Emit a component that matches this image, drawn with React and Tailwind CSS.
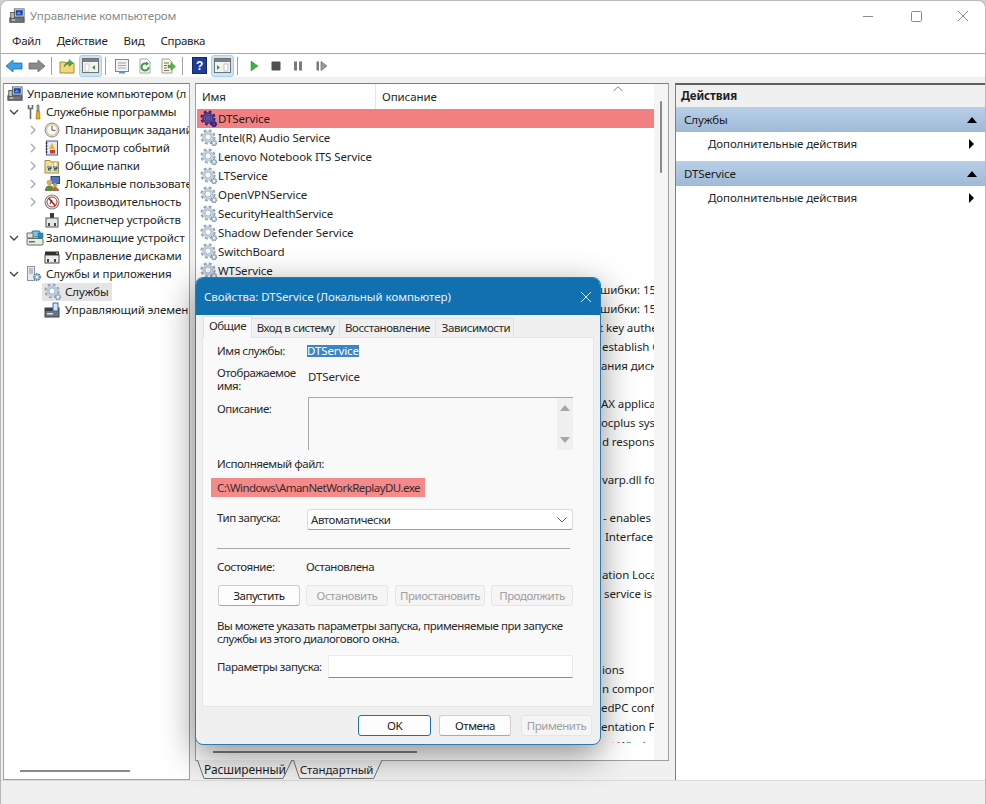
import React from "react";

const Gear = ({ dark }) => (
  <svg width="18" height="18" viewBox="0 0 18 18" className="shrink-0">
    <circle cx="8" cy="8" r="6.500" fill="none" stroke={dark ? "#2b2a7a" : "#8ea5b9"} strokeWidth="2.200" strokeDasharray="2.800 2.300" />
    <circle cx="8" cy="8" r="4.800" fill="none" stroke={dark ? "#3d3490" : "#bccbd9"} strokeWidth="2" />
    <circle cx="8" cy="8" r="3.200" fill={dark ? "#6a4a9a" : "#f8fafc"} stroke={dark ? "#2b2a7a" : "#7f97ad"} strokeWidth="0.800" />
    <circle cx="14" cy="14" r="2.600" fill={dark ? "#2b2a7a" : "#b4c5d3"} stroke={dark ? "#2b2a7a" : "#7d96ab"} strokeWidth="1.200" strokeDasharray="1.400 0.800" />
    <circle cx="14" cy="14" r="1" fill={dark ? "#6a4a9a" : "#fff"} />
  </svg>
);

const Computer = () => (
  <svg width="16" height="16" viewBox="0 0 18 18" className="shrink-0">
    <rect x="6" y="1" width="11" height="9" fill="#dfe6ee" stroke="#56606c" />
    <rect x="7.500" y="2.500" width="8" height="6" fill="#1b3f9c" />
    <path d="M8 7l3-3 3 3" fill="#5aa2e8" />
    <rect x="9" y="10" width="5" height="2" fill="#8a94a0" />
    <rect x="1" y="11" width="16" height="5" fill="#70767c" stroke="#3c4248" />
    <rect x="2" y="5" width="4" height="7" fill="#b9c0c8" stroke="#4a5058" />
    <rect x="3" y="13" width="4" height="1" fill="#fff" />
  </svg>
);

const Chev = ({ open }) => (
  <svg width="10" height="10" viewBox="0 0 10 10" className="shrink-0">
    {open ? (
      <path d="M1 3 5 7 9 3" fill="none" stroke="#404040" strokeWidth="1.300" />
    ) : (
      <path d="M3 1 7 5 3 9" fill="none" stroke="#a6a6a6" strokeWidth="1.300" />
    )}
  </svg>
);

const TreeIcon = ({ k }) => {
  const p = { width: 16, height: 16, viewBox: "0 0 16 16", className: "shrink-0" };
  switch (k) {
    case "tools":
      return (
        <svg {...p}>
          <path d="M2.500 1v3.500h4V1M4.500 4.500V15" fill="none" stroke="#6a6a6a" strokeWidth="1.600" />
          <path d="M11 1h2v6h-2z" fill="#a8a8a8" stroke="#5c5c5c" strokeWidth=".6" />
          <path d="M10.500 7h3l.5 8h-4z" fill="#e8a91c" stroke="#9a6c08" strokeWidth=".6" />
        </svg>
      );
    case "clock":
      return (
        <svg {...p}>
          <circle cx="8" cy="8" r="7" fill="#efe3c6" stroke="#8a8a8a" />
          <circle cx="8" cy="8" r="5.200" fill="#fbfaf4" stroke="#b8a878" strokeWidth=".6" />
          <path d="M8 4v4.300h3.400" fill="none" stroke="#555" strokeWidth="1" />
        </svg>
      );
    case "log":
      return (
        <svg {...p}>
          <rect x="2.500" y="1" width="11" height="14" fill="#e4e8f4" stroke="#4c5c80" />
          <path d="M1.500 3h2M1.500 6h2M1.500 9h2M1.500 12h2" stroke="#222" strokeWidth="1" />
          <path d="M8 3 11 9H5z" fill="#e9b420" />
          <rect x="6" y="10" width="5" height="3.500" fill="#c33d3d" />
        </svg>
      );
    case "share":
      return (
        <svg {...p}>
          <path d="M1 5V2.500h5l1 1.500h7.500V15H1z" fill="#f3dd90" stroke="#a88a38" />
          <path d="M10 4h3v6h-3z" fill="#fff" stroke="#a88a38" strokeWidth=".5" />
          <path d="M3 9h4v1.500H4.500V12H7M9 9h4v1.500h-2.500V12H13" fill="none" stroke="#2b5a9a" strokeWidth="1.200" />
        </svg>
      );
    case "users":
      return (
        <svg {...p}>
          <rect x="7" y="0.500" width="8.500" height="7" fill="#4d78c0" stroke="#2c4a84" />
          <circle cx="5.500" cy="6.500" r="2.800" fill="#d8a878" />
          <path d="M1 15c0-4 2-5.500 4.500-5.500S10 11 10 15z" fill="#5c8c3c" />
          <circle cx="11" cy="9" r="2.200" fill="#c89868" />
          <path d="M8 15c0-3 1.500-4 3-4s4 1 4 4z" fill="#b06a4a" />
        </svg>
      );
    case "perf":
      return (
        <svg {...p}>
          <circle cx="8" cy="8" r="7" fill="#f4f0e8" stroke="#8a8478" strokeWidth="1.200" />
          <circle cx="8" cy="8" r="5" fill="#fff" stroke="#c43030" strokeWidth="1" />
          <path d="M4.500 4 11.500 12" stroke="#b02020" strokeWidth="1.600" />
          <path d="M6 10l2-4" stroke="#303030" strokeWidth="1" />
        </svg>
      );
    case "device":
      return (
        <svg {...p}>
          <rect x="6" y="1" width="4" height="5" fill="#3c3c3c" />
          <rect x="2" y="6" width="12" height="9" fill="#e6e6e6" stroke="#555" />
          <rect x="4" y="11" width="2" height="3" fill="#444" />
          <rect x="10" y="11" width="2" height="3" fill="#444" />
        </svg>
      );
    case "storage":
      return (
        <svg {...p} width="18" viewBox="0 0 18 16">
          <rect x="6" y="1" width="8" height="6" rx="1" fill="#7fbfe8" stroke="#2f6f9c" />
          <rect x="12" y="3" width="5" height="5" fill="#1f8fd0" stroke="#1a5f8c" strokeWidth=".5" />
          <path d="M1 3h6v5H1z" fill="#dfe5e0" stroke="#5f7a68" />
          <rect x="1" y="8.500" width="16" height="6.500" rx="1" fill="#e8ebe6" stroke="#60705f" />
          <rect x="3" y="11" width="6" height="1.500" fill="#3c8a3c" />
        </svg>
      );
    case "disk":
      return (
        <svg {...p}>
          <rect x="1" y="7" width="14" height="8" fill="#ececec" stroke="#4a4a4a" />
          <rect x="1" y="3.500" width="14" height="3.500" fill="#2f2f2f" />
          <rect x="12" y="4.500" width="2" height="1.500" fill="#46c846" />
          <rect x="3" y="11" width="2" height="3" fill="#444" />
          <rect x="10" y="11" width="2" height="3" fill="#444" />
        </svg>
      );
    case "apps":
      return (
        <svg {...p}>
          <rect x="1.500" y="0.500" width="7" height="14" fill="#e6eaf0" stroke="#8a96a6" />
          <path d="M3 3h4M3 5h4M3 7h4" stroke="#8a96a6" />
          <circle cx="11" cy="11" r="3.200" fill="#a8c0d8" stroke="#4c78a8" strokeWidth="1.400" strokeDasharray="1.500 .8" />
          <circle cx="11" cy="11" r="1" fill="#fff" />
        </svg>
      );
    case "wmi":
      return (
        <svg {...p}>
          <rect x="1" y="6" width="14" height="9" fill="#6b7480" stroke="#3a424c" />
          <rect x="1" y="6" width="14" height="3" fill="#3a424c" />
          <rect x="9" y="1" width="5" height="8" fill="#d8e4f0" stroke="#3c6c9c" />
          <rect x="3" y="11" width="6" height="1.500" fill="#e4e4e4" />
        </svg>
      );
    default:
      return null;
  }
};

const tree = [
  { t: "Служебные программы", lvl: 1, open: true, i: "tools" },
  { t: "Планировщик заданий", lvl: 2, i: "clock", chev: true },
  { t: "Просмотр событий", lvl: 2, i: "log", chev: true },
  { t: "Общие папки", lvl: 2, i: "share", chev: true },
  { t: "Локальные пользовате", lvl: 2, i: "users", chev: true },
  { t: "Производительность", lvl: 2, i: "perf", chev: true },
  { t: "Диспетчер устройств", lvl: 2, i: "device" },
  { t: "Запоминающие устройст", lvl: 1, open: true, i: "storage" },
  { t: "Управление дисками", lvl: 2, i: "disk" },
  { t: "Службы и приложения", lvl: 1, open: true, i: "apps" },
  { t: "Службы", lvl: 2, gear: true, sel: true },
  { t: "Управляющий элемен", lvl: 2, i: "wmi" },
];

const names = ["Intel(R) Audio Service", "Lenovo Notebook ITS Service", "LTService", "OpenVPNService", "SecurityHealthService", "Shadow Defender Service", "SwitchBoard", "WTService"];

const behind = [
  { t: "шибки: 15", c: "ml-[404px]" },
  { t: "шибки: 15", c: "ml-[404px]" },
  { t: "t key authe", c: "ml-[403px]" },
  { t: "establish C", c: "ml-[406px]" },
  { t: "ания диск", c: "ml-[405px]" },
  { t: "\u00a0", c: "" },
  { t: "AX applica", c: "ml-[405px]" },
  { t: "ocplus sys", c: "ml-[405px]" },
  { t: "d responsi", c: "ml-[406px]" },
  { t: "\u00a0", c: "" },
  { t: "varp.dll fo", c: "ml-[406px]" },
  { t: "\u00a0", c: "" },
  { t: "- enables", c: "ml-[407px]" },
  { t: "Interface", c: "ml-[409px]" },
  { t: "\u00a0", c: "" },
  { t: "ation Loca", c: "ml-[406px]" },
  { t: "service is", c: "ml-[408px]" },
  { t: "\u00a0", c: "" },
  { t: "\u00a0", c: "" },
  { t: "\u00a0", c: "" },
  { t: "ions", c: "ml-[406px]" },
  { t: "n compon", c: "ml-[406px]" },
  { t: "edPC conf", c: "ml-[405px]" },
  { t: "entation Fo", c: "ml-[405px]" },
  { t: "nt Windows", c: "ml-[408px]" },
];

const Sep = ({ wide }) => <div className={"w-px h-[18px] bg-[#a0a0a0] " + (wide ? "ml-[3px] mr-[4px]" : "mx-[3px]")} />;

const TB = ({ children, active, w = "w-[23px]" }) => (
  <div className={"h-[22px] flex items-center justify-center rounded-[3px] " + w + " " + (active ? "bg-[#cce4f7] border border-[#a8d0f0]" : "")}>{children}</div>
);

const Toolbar = () => (
  <div className="h-[23px] bg-white flex items-center pl-[1px]">
    <TB>
      <svg width="18" height="14" viewBox="0 0 18 14"><path d="M1 7 8 1v3h9v6H8v3z" fill="#3da0e8" stroke="#1c6cb0" strokeWidth=".8" /></svg>
    </TB>
    <TB>
      <svg width="18" height="14" viewBox="0 0 18 14"><path d="M17 7 10 1v3H1v6h9v3z" fill="#8a8a8a" stroke="#6a6a6a" strokeWidth=".8" /></svg>
    </TB>
    <Sep />
    <TB w="w-[24px]">
      <svg width="16" height="16" viewBox="0 0 16 16"><path d="M1 4h5l1 1h8v10H1z" fill="#f2d77a" stroke="#a88a38" /><path d="M5 9C6 5 8 4 10 4V1.500L14 5l-4 3.500V6C8 6 6.500 7 5 9z" fill="#4ca83c" stroke="#2c7a24" strokeWidth=".5" /></svg>
    </TB>
    <TB active>
      <svg width="17" height="15" viewBox="0 0 17 15"><rect x=".5" y=".5" width="16" height="14" fill="#f4f4f4" stroke="#707070" /><rect x="1" y="1" width="15" height="3" fill="#7a8088" /><path d="M3 6h4v7H3z" fill="#fff" stroke="#9aa" strokeWidth=".5" /><path d="M13 7v5l-3-2.500z" fill="#3c9c3c" /></svg>
    </TB>
    <Sep wide />
    <TB>
      <svg width="16" height="16" viewBox="0 0 16 16"><rect x="1.500" y="1.500" width="13" height="12" fill="#f2f2f2" stroke="#808890" /><path d="M4 5h8M4 7.500h8M4 10h8" stroke="#a0a8b0" /><rect x="5" y="14" width="6" height="1.500" fill="#4c9ce0" /></svg>
    </TB>
    <TB>
      <svg width="16" height="16" viewBox="0 0 16 16"><path d="M3 1h7l3 3v11H3z" fill="#fff" stroke="#a0a8b0" /><path d="M11.500 9A3.500 3.500 0 1 1 8 5.500h2" fill="none" stroke="#3c9c3c" strokeWidth="2" /><path d="M9 3.500 12 5.500 9 8z" fill="#3c9c3c" /></svg>
    </TB>
    <TB>
      <svg width="16" height="16" viewBox="0 0 16 16"><path d="M2 1h7l3 3v11H2z" fill="#fbf6e0" stroke="#a0a090" /><path d="M4 5h5M4 7.500h3M4 10h3M4 12.500h5" stroke="#707070" /><path d="M8 7h3V4.500L15.500 8.500 11 12.500V10H8z" fill="#4cb83c" stroke="#2c7a24" strokeWidth=".4" /></svg>
    </TB>
    <Sep wide />
    <TB w="w-[24px]">
      <svg width="15" height="17" viewBox="0 0 15 17"><rect x=".5" y=".5" width="14" height="16" fill="#1e3f96" stroke="#10286c" /><text x="7.500" y="13" textAnchor="middle" fontSize="12" fontWeight="700" fill="#fff" fontFamily="Liberation Sans, sans-serif">?</text></svg>
    </TB>
    <TB active>
      <svg width="17" height="15" viewBox="0 0 17 15"><rect x=".5" y=".5" width="16" height="14" fill="#f4f4f4" stroke="#707070" /><rect x="1" y="1" width="15" height="3" fill="#7a8088" /><path d="M3 7v5l3-2.500z" fill="#3c9c3c" /><path d="M10 6h4v7h-4z" fill="#fff" stroke="#889" strokeWidth=".5" /></svg>
    </TB>
    <Sep />
    <div className="w-[1px]" />
    <TB>
      <svg width="12" height="12" viewBox="0 0 12 12"><path d="M3 1v10l7-5z" fill="#3fb23f" stroke="#2a8a2a" strokeWidth=".5" /></svg>
    </TB>
    <TB w="w-[22px]">
      <svg width="12" height="12" viewBox="0 0 12 12"><rect x="1.500" y="1.500" width="9" height="9" rx="1" fill="#505050" /></svg>
    </TB>
    <TB w="w-[22px]">
      <svg width="12" height="12" viewBox="0 0 12 12"><rect x="2" y="1.500" width="3" height="9" fill="#7a7a7a" /><rect x="7" y="1.500" width="3" height="9" fill="#7a7a7a" /></svg>
    </TB>
    <TB w="w-[26px]">
      <svg width="14" height="12" viewBox="0 0 14 12"><rect x="1.500" y="1.500" width="2.500" height="9" fill="#7a7a7a" /><path d="M6 1.500v9l6-4.500z" fill="#9a9a9a" stroke="#6a6a6a" strokeWidth=".7" /></svg>
    </TB>
  </div>
);

const TreeRow = ({ r }) => {
  const lvl1 = r.lvl === 1;
  return (
    <div className={"h-[18px] flex items-center whitespace-nowrap " + (lvl1 ? "pl-[3px]" : "pl-[22px]")}>
      <span className="w-[16px] flex items-center justify-start shrink-0 pl-[2px]">{r.open ? <Chev open /> : r.chev ? <Chev /> : null}</span>
      <span className={"flex items-center h-[18px] pr-[3px] " + (lvl1 ? "pl-[3px] " : "pl-[2px] ") + (r.sel ? "bg-[#e5e5e5]" : "")}>
        <span className={"flex items-center " + (lvl1 ? "w-[20px]" : "w-[21px]")}>{r.gear ? <Gear /> : <TreeIcon k={r.i} />}</span>
        {r.t}
      </span>
    </div>
  );
};

const ListRow = ({ children, c }) => (
  <div className={"h-[19px] flex items-center whitespace-nowrap overflow-hidden shrink-0 " + c}>{children}</div>
);

const ActionHead = ({ t }) => (
  <div className="h-[25px] flex items-center justify-between pl-[8px] pr-[8px] bg-gradient-to-b from-[#b8cfe8] to-[#9fb9d6] text-[#1a1a1a]">
    <span>{t}</span>
    <svg width="10" height="6" viewBox="0 0 10 6"><path d="M0 6 5 0l5 6z" fill="#000" /></svg>
  </div>
);

const ActionRow = () => (
  <div className="h-[29px] flex items-center justify-between pl-[32px] pr-[11px] pb-[6px]">
    <span>Дополнительные действия</span>
    <svg width="5" height="10" viewBox="0 0 5 10"><path d="M0 0l5 5-5 5z" fill="#000" /></svg>
  </div>
);

const Btn = ({ children, w, disabled, primary }) => (
  <div
    className={
      "h-[21px] flex items-center justify-center rounded-[3px] border whitespace-nowrap " + w + " " +
      (disabled ? "border-[#e5e5e5] bg-[#f5f5f5] text-[#a0a0a0]" : primary ? "border-[#1a6fae] bg-[#fdfdfd] text-[#1a1a1a]" : "border-[#cfcfcf] border-b-[#a8a8a8] bg-[#fdfdfd] text-[#1a1a1a]")
    }
  >
    {children}
  </div>
);

const Dialog = () => (
  <div className="absolute left-[195px] top-[277px] w-[406px] h-[468px] rounded-[8px] border border-[#2a7ab4] bg-[#f0f0f0] overflow-hidden shadow-[0_10px_34px_rgba(0,0,0,0.45)] flex flex-col text-[#2a2a2a] whitespace-nowrap tracking-[-0.45px]">
    <div className="h-[37px] bg-[#1070b0] flex items-center justify-between pl-[8px] pr-[8px] text-[#e8f1f8] shrink-0 tracking-[-0.05px]">
      <span>Свойства: DTService (Локальный компьютер)</span>
      <svg width="12" height="12" viewBox="0 0 12 12"><path d="M1 1l10 10M11 1 1 11" stroke="#dfeaf4" strokeWidth="1" /></svg>
    </div>
    <div className="flex pl-[7px] pt-[2px] h-[22px] items-end shrink-0">
      <div className="w-[49px] h-[22px] bg-[#f9f9f9] border border-b-0 border-[#e2e2e2] flex items-center justify-center z-10 -mb-px pb-[4px]">Общие</div>
      <div className="w-[88px] h-[19px] bg-[#f0f0f0] border-r border-t border-[#e2e2e2] flex items-center justify-center pb-[1px]">Вход в систему</div>
      <div className="w-[96px] h-[19px] bg-[#f0f0f0] border-r border-t border-[#e2e2e2] flex items-center justify-center pb-[1px]">Восстановление</div>
      <div className="w-[78px] h-[19px] bg-[#f0f0f0] border-r border-t border-[#e2e2e2] flex items-center justify-center pb-[1px] pl-[3px]">Зависимости</div>
    </div>
    <div className="mx-[6px] h-[370px] bg-[#f9f9f9] border border-[#e6e6e6] pl-[14px] pr-[18px] pt-[5px] shrink-0 relative flex flex-col">
      <div className="flex h-[16px] items-center">
        <span className="w-[90px]">Имя службы:</span>
        <span className="bg-[#3d86c6] text-white leading-[12px] h-[12px] flex items-center tracking-[-0.1px]">DTService</span>
      </div>
      <div className="flex mt-[7px] h-[26px]">
        <div className="w-[91px] leading-[13px]">Отображаемое<br />имя:</div>
        <div className="leading-[13px] pt-[4px] tracking-[-0.1px]">DTService</div>
      </div>
      <div className="flex mt-[5px]">
        <span className="w-[91px] pt-[3px]">Описание:</span>
        <div className="w-[265px] h-[53px] border-l border-t border-[#a8a8a8] bg-[#f9f9f9] flex justify-end">
          <div className="w-[16px] h-full bg-[#f0f0f0] flex flex-col items-center justify-between py-[7px]">
            <svg width="10" height="6" viewBox="0 0 10 6"><path d="M0 6 5 0l5 6z" fill="#a6a6a6" /></svg>
            <svg width="10" height="6" viewBox="0 0 10 6"><path d="M0 0h10L5 6z" fill="#a6a6a6" /></svg>
          </div>
        </div>
      </div>
      <div className="mt-[7px] h-[14px] flex items-center">Исполняемый файл:</div>
      <div className="mt-[7px] -ml-[6px] w-[214px] h-[19px] bg-[#f58a8a] flex items-center pl-[6px] text-[#3a2a2a] tracking-[-0.55px]">C:\Windows\AmanNetWorkReplayDU.exe</div>
      <div className="flex mt-[12px] items-center">
        <span className="w-[90px] -mt-[3px]">Тип запуска:</span>
        <div className="w-[266px] h-[21px] bg-white border border-[#dcdcdc] border-b-[#a0a0a0] rounded-[3px] flex items-center justify-between pl-[3px] pr-[5px]">
          <span>Автоматически</span>
          <svg width="10" height="6" viewBox="0 0 10 6"><path d="M.5.500 5 5 9.500.500" fill="none" stroke="#606060" /></svg>
        </div>
      </div>
      <div className="mt-[18px] w-[353px] h-px bg-[#a8a8a8]" />
      <div className="flex mt-[11px] h-[14px] items-center">
        <span className="w-[89px]">Состояние:</span>
        <span>Остановлена</span>
      </div>
      <div className="flex mt-[11px] pl-px">
        <Btn w="w-[82px]">Запустить</Btn>
        <div className="w-[6px]" />
        <Btn w="w-[82px]" disabled>Остановить</Btn>
        <div className="w-[7px]" />
        <Btn w="w-[90px]" disabled>Приостановить</Btn>
        <div className="w-[6px]" />
        <Btn w="w-[82px]" disabled>Продолжить</Btn>
      </div>
      <div className="mt-[13px] leading-[13px]">Вы можете указать параметры запуска, применяемые при запуске<br />службы из этого диалогового окна.</div>
      <div className="flex mt-[10px] items-center">
        <span className="w-[111px]">Параметры запуска:</span>
        <div className="w-[245px] h-[23px] bg-white border border-[#ececec] border-b-[#8a8a8a]" />
      </div>
    </div>
    <div className="flex pl-[162px] pt-[8px]">
      <Btn w="w-[73px]" primary>OK</Btn>
      <div className="w-[8px]" />
      <Btn w="w-[72px]">Отмена</Btn>
      <div className="w-[10px]" />
      <Btn w="w-[71px]" disabled>Применить</Btn>
    </div>
  </div>
);

const Tab = ({ children, w, d, c }) => (
  <div className={"relative h-[19px] flex items-center justify-center " + w + " " + c}>
    <svg width="100%" height="19" viewBox="0 0 96 19" preserveAspectRatio="none" className="absolute inset-0">
      <path d={d} fill="#f2f2f2" stroke="#707070" strokeWidth="1" />
    </svg>
    <span className="relative">{children}</span>
  </div>
);

export default function App() {
  return (
    <div className="w-[986px] h-[804px] relative overflow-hidden bg-[#cfcfcf] text-[11.5px] tracking-[-0.1px] text-[#1f1f1f] font-['Noto_Sans',sans-serif]">
      <div className="w-full h-full rounded-t-[8px] border border-b-0 border-[#b8b8b8] bg-[#f0f0f0] flex flex-col overflow-hidden">
        <div className="h-[30px] bg-white flex items-center pl-[8px] shrink-0 relative">
          <Computer />
          <span className="ml-[5px] text-[#8a8a8a]">Управление компьютером</span>
          <div className="ml-auto flex items-center">
            <svg width="12" height="12" viewBox="0 0 12 12" className="mr-[37px]"><path d="M1 6.500h10" stroke="#8a8a8a" /></svg>
            <svg width="11" height="11" viewBox="0 0 11 11" className="mr-[35px]"><rect x=".5" y=".5" width="10" height="10" rx="1" fill="none" stroke="#8a8a8a" /></svg>
            <svg width="12" height="12" viewBox="0 0 12 12" className="mr-[16px]"><path d="M1 1l10 10M11 1 1 11" stroke="#8a8a8a" /></svg>
          </div>
        </div>
        <div className="h-[23px] bg-white border-b border-[#a8a8a8] flex items-center pl-[11px] pb-[2px] gap-[16px] shrink-0 tracking-[-0.25px]">
          <span>Файл</span><span>Действие</span><span>Вид</span><span>Справка</span>
        </div>
        <Toolbar />
        <div className="flex-1 flex pt-[6px] min-h-0">
          <div className="w-[187px] ml-[2px] bg-white border border-[#a0a0a0] border-t-[#808080] overflow-hidden shrink-0 relative flex flex-col">
            <div className="h-[18px] flex items-center pl-[3px] whitespace-nowrap mt-px">
              <span className="w-[16px] mr-[4px]"><Computer /></span>Управление компьютером (л
            </div>
            {tree.map((r) => <TreeRow key={r.t} r={r} />)}
            <div className="mt-auto mb-[7px] ml-[16px] w-[110px] h-[2px] bg-[#8a8a8a]" />
          </div>
          <div className="w-[5px]" />
          <div className="w-[474px] flex flex-col shrink-0">
            <div className="flex-1 bg-white border border-[#a0a0a0] border-t-[#808080] flex min-h-0 overflow-hidden">
              <div className="w-[458px] shrink-0 flex flex-col overflow-hidden">
                <div className="h-[25px] flex items-center shrink-0 relative">
                  <div className="w-[180px] pl-[6px] h-full flex items-center border-r border-[#e5e5e5]">Имя</div>
                  <div className="pl-[6px]">Описание</div>
                  <svg width="10" height="6" viewBox="0 0 10 6" className="absolute left-[417px] top-[2px]"><path d="M.5 5 5 .8 9.500 5" fill="none" stroke="#808080" /></svg>
                </div>
                <div className="h-[634px] flex flex-col overflow-hidden shrink-0">
                  <ListRow c="bg-[#f28080] pl-[3px] ml-px"><Gear dark />DTService</ListRow>
                  {names.map((n) => <ListRow key={n} c="pl-[3px] ml-px"><Gear />{n}</ListRow>)}
                  {behind.map((b, i) => <ListRow key={i} c={b.c}>{b.t}</ListRow>)}
                </div>
                <div className="ml-[17px] mt-[8px] w-[204px] h-[2px] bg-[#808080] shrink-0" />
              </div>
              <div className="flex-1 bg-[#f5f5f5] relative">
                <div className="absolute left-[6px] top-[17px] w-[2px] h-[72px] bg-[#8a8a8a] rounded" />
              </div>
            </div>
            <div className="h-[20px] flex items-start pl-[2px] shrink-0 -mt-px">
              <Tab w="w-[96px]" c="text-[12px]" d="M.5 0 7 18.500H86L95 0">Расширенный</Tab>
              <Tab w="w-[90px]" c="text-[11.5px] pr-[3px]" d="M.5 0 7 18.500H86L95 0">Стандартный</Tab>
            </div>
          </div>
          <div className="w-[6px]" />
          <div className="flex-1 flex flex-col bg-white border border-[#808080] border-r-0 border-t-[#606060] border-t-2 border-b-0 overflow-hidden">
            <div className="h-[22px] bg-[#f0f0f0] flex items-center pl-[5px] font-bold shrink-0">Действия</div>
            <ActionHead t="Службы" />
            <ActionRow />
            <ActionHead t="DTService" />
            <ActionRow />
          </div>
        </div>
        <div className="h-[24px] bg-[#f0f0f0] border-t border-[#dcdcdc] shrink-0" />
      </div>
      <Dialog />
    </div>
  );
}
